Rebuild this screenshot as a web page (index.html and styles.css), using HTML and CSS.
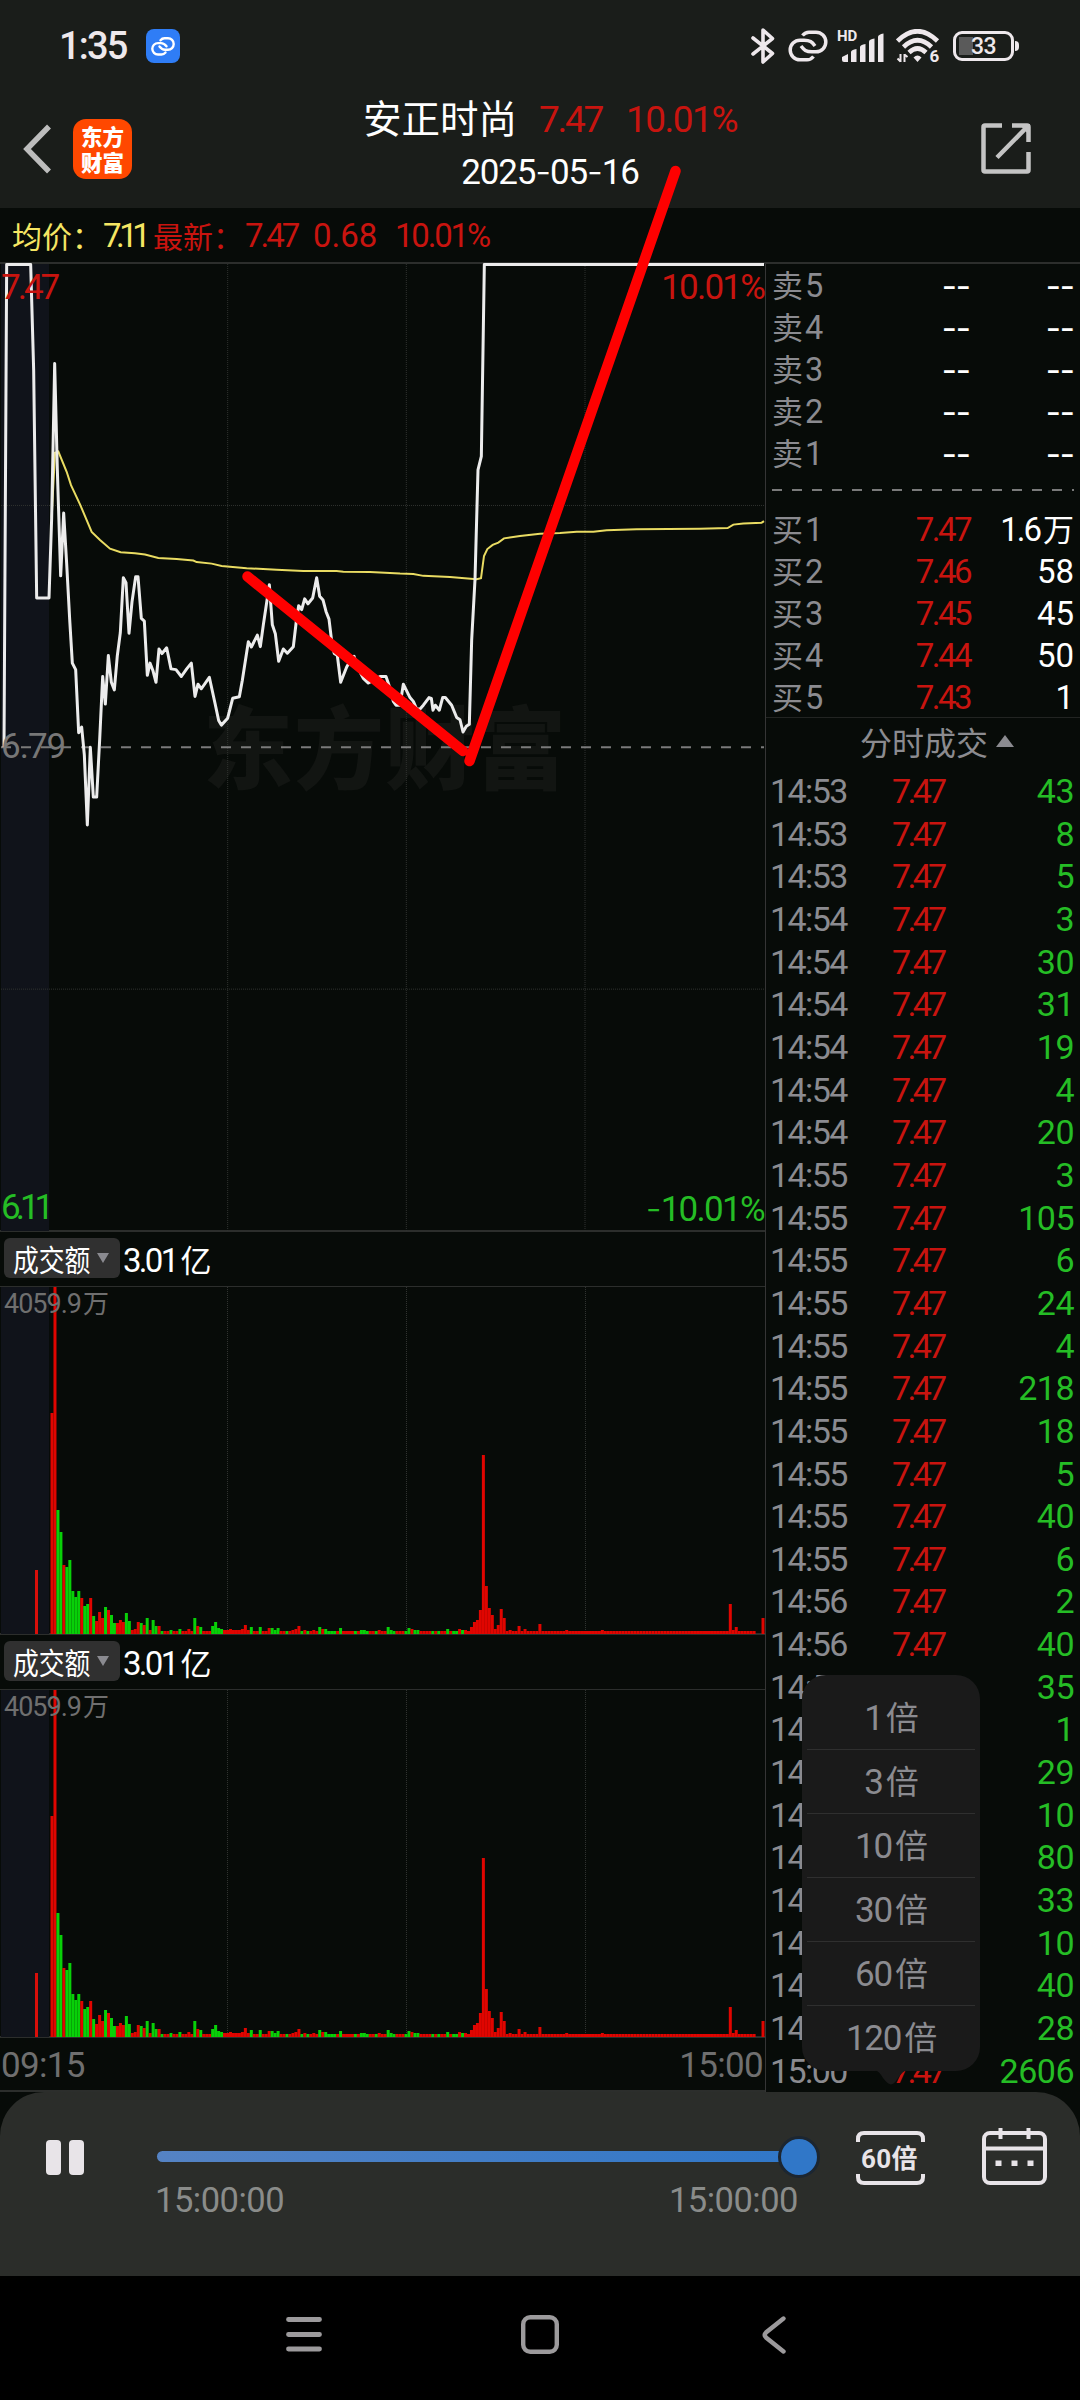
FILE: index.html
```html
<!DOCTYPE html>
<html lang="zh-CN">
<head>
    <meta charset="UTF-8">
    <meta name="viewport" content="width=device-width, initial-scale=1.0">
    <title>安正时尚 分时回放</title>
    <link rel="stylesheet" href="styles.css">
</head>
<body>
    <div class="screen">
        <!-- Status bar -->
        <div class="status-bar">
            <div class="status-left">
                <span class="clock">1:35</span>
                <span class="link-badge">
                    <svg width="34" height="34" viewBox="0 0 34 34"><g fill="none" stroke="#fff" stroke-width="2.4" stroke-linecap="round"><path d="M14.500 11.300 C15.800 9.700 17 9.300 18.500 9.300 H22 a5.700 5.700 0 0 1 0 11.400 H19 C16.500 20.700 15 19.500 13.500 17.500"/><path d="M19.500 23.500 C18.200 25.100 17 25.500 15.500 25.500 H12 a5.700 5.700 0 0 1 0 -11.400 H15 C17.500 14.100 19 15.300 20.500 17.300"/></g></svg>
                </span>
            </div>
            <div class="status-right">
                <svg class="bt" width="24" height="36" viewBox="0 0 24 36"><path d="M2 10 L21.500 25.500 L12 34 V2 L21.500 10.500 L2 26" fill="none" stroke="#eee8ec" stroke-width="3.6" stroke-linejoin="round" stroke-linecap="round"/></svg>
                <svg class="chain" width="40" height="32" viewBox="0 0 40 32"><g fill="none" stroke="#eee8ec" stroke-width="3.5"><path d="M14.500 5.500 C17 2.500 19 2.200 21 2.200 H28 a9.800 9.800 0 0 1 0 19.600 H24 C18 21.800 16 20 13 16"/><path d="M25.500 26.500 C23 29.500 21 29.800 19 29.800 H12 a9.800 9.800 0 0 1 0 -19.600 H16 C22 10.200 24 12 27 16"/></g></svg>
                <div class="signal">
                    <span class="hd">HD</span>
                    <svg width="42" height="29" viewBox="0 0 42 29" fill="#eee8ec"><path d="M0 24 L6 21 V29 H2 Q0 29 0 27Z"/><path d="M9 19 Q9 17 14.500 16 V29 H9Z"/><path d="M18 14 Q18 12 23.500 11 V29 H18Z"/><path d="M27 8.500 Q27 6.500 32.500 5.500 V29 H27Z"/><path d="M36 4 Q36 1.500 41.500 .5 V29 H36Z"/></svg>
                </div>
                <svg class="wifi" width="44" height="34" viewBox="0 0 44 34"><g fill="none" stroke="#eee8ec" stroke-width="4.600"><path d="M1.500 12 Q21.500 -7.500 41.500 12"/><path d="M7.500 18 Q21.500 4.500 35.500 18"/><path d="M13 23.500 Q21.500 15.500 30 23.500"/></g><path d="M17.500 28.500 Q21.500 24.500 25.500 28.500 L21.500 33Z" fill="#eee8ec"/><path d="M4.500 25 V33 M1.500 29.500 L4.500 32.500 M8.500 33 V25 M11.500 28 L8.500 25.500" stroke="#eee8ec" stroke-width="2"/><text x="33.500" y="33" class="wifi-gen">6</text></svg>
                <div class="battery"><span>33</span></div>
            </div>
        </div>

        <!-- Title bar -->
        <div class="title-bar">
            <div class="title-left">
                <svg width="30" height="50" viewBox="0 0 30 50"><path d="M27 2.500 L5 25 L27 47.500" fill="none" stroke="#bdbdbd" stroke-width="5.500"/></svg>
                <div class="logo"><span>东方</span><span>财富</span></div>
            </div>
            <div class="title-center">
                <div class="stock-line"><span class="stock-name">安正时尚</span><span class="stock-price">7.47</span><span class="stock-pct">10.01%</span></div>
                <div class="stock-date">2025<i>-</i>05<i>-</i>16</div>
            </div>
            <svg class="share" width="50" height="51" viewBox="0 0 50 51"><path d="M21 2.500 H4 Q2.500 2.500 2.500 4 V47 Q2.500 48.500 4 48.500 H46 Q47.500 48.500 47.500 47 V29 M31 2.500 H46 Q47.500 2.500 47.500 4 V19 M47 3 L16 34.500" fill="none" stroke="#c4c4c4" stroke-width="4.500"/><path d="M38 1 H49 V13Z" fill="#c4c4c4"/></svg>
        </div>

        <div class="quote-row">
            <span class="avg cn">均价：</span><span class="avg avg-num">7.11</span>
            <span class="red cn last-label">最新：</span><span class="red last-num">7.47</span><span class="red chg">0.68</span><span class="red pct">10.01%</span>
        </div>

        <div class="main">
            <div class="charts">
                <div class="price-chart">
                    <div class="watermark">东方财富</div>
                    <svg class="price-svg" viewBox="0 37 2292 2527" preserveAspectRatio="none">
                        <rect class="preopen" x="3" y="37" width="144" height="2527"/>
                        <path class="grid" d="M683 37V2564M1219 37V2564M1755 37V2564M3 668H2292M3 1932H2292"/>
                        <path class="base-line" d="M3 1300H2292"/>
                        <polyline class="avg-line" points="155,700 165,530 175,527 200,580 213,615 240,665 275,737 300,758 330,781 362,790 405,793 435,796 475,805 530,808 580,812 590,816 635,820 665,826 740,832 830,836 910,839 1010,839 1030,841 1110,842 1200,846 1240,847 1270,852 1350,855 1430,861 1443,858 1452,800 1462,782 1478,771 1495,765 1512,754 1560,748 1620,742 1680,740 1730,737 1780,737 1820,733 1910,730 2100,729 2183,727 2200,718 2230,715 2285,713 2292,709"/>
                        <polyline class="price-line" points="12,1300 20,38 92,38 101,315 110,910 147,910 155,700 164,297 172,575 182,852 191,688 200,820 209,965 217,1080 227,1097 236,1262 245,1247 253,1320 262,1503 271,1300 280,1430 290,1430 299,1280 308,1115 316,1187 325,1060 334,1130 343,1150 352,1060 361,1000 370,857 378,870 387,1002 396,920 407,854 414,854 424,963 433,970 442,1112 450,1080 459,1100 468,1130 477,1043 486,1055 500,1040 513,1095 528,1097 544,1115 560,1095 574,1080 585,1167 594,1135 604,1147 628,1117 645,1185 656,1230 664,1242 683,1224 698,1172 718,1168 727,1125 745,1024 754,1038 772,1007 781,1037 790,980 808,875 817,980 826,1003 836,1075 850,1043 862,1054 880,1037 889,970 896,930 905,940 914,912 924,925 938,910 950,857 959,905 969,915 978,945 987,965 996,1030 1003,1055 1012,1060 1022,1130 1040,1090 1050,1075 1062,1062 1075,1095 1090,1120 1105,1132 1120,1125 1140,1115 1158,1115 1166,1135 1180,1180 1188,1190 1200,1190 1210,1135 1230,1170 1240,1180 1250,1200 1260,1200 1270,1190 1287,1170 1294,1172 1299,1203 1306,1190 1318,1203 1328,1170 1336,1170 1355,1190 1370,1222 1380,1228 1389,1260 1399,1245 1408,1240 1415,1020 1425,862 1434,575 1444,540 1453,38 2292,38"/>
                    </svg>
                    <span class="axis axis-high">7.47</span>
                    <span class="axis axis-high-pct">10.01%</span>
                    <span class="axis axis-base">6.79</span>
                    <span class="axis axis-low">6.11</span>
                    <span class="axis axis-low-pct"><i>-</i>10.01%</span>
                </div>

                <div class="vol-head"><span class="vol-btn"><b>成交额</b><em></em></span><span class="vol-value">3.01<span>亿</span></span></div>
                <div class="vol-chart">
                    <svg class="vol-svg" width="765" height="348"></svg>
                    <span class="vol-max">4059.9<span>万</span></span>
                </div>
                <div class="vol-head"><span class="vol-btn"><b>成交额</b><em></em></span><span class="vol-value">3.01<span>亿</span></span></div>
                <div class="vol-chart">
                    <svg class="vol-svg" width="765" height="348"></svg>
                    <span class="vol-max">4059.9<span>万</span></span>
                </div>
                <div class="time-axis"><span>09:15</span><span>15:00</span></div>
            </div>

            <div class="side">
                <div class="book asks">
                    <div class="book-row"><span>卖<u>5</u></span><span class="none">--</span><span class="none">--</span></div>
                    <div class="book-row"><span>卖<u>4</u></span><span class="none">--</span><span class="none">--</span></div>
                    <div class="book-row"><span>卖<u>3</u></span><span class="none">--</span><span class="none">--</span></div>
                    <div class="book-row"><span>卖<u>2</u></span><span class="none">--</span><span class="none">--</span></div>
                    <div class="book-row"><span>卖<u>1</u></span><span class="none">--</span><span class="none">--</span></div>
                </div>
                <div class="book-divider"></div>
                <div class="book bids">
                    <div class="book-row"><span>买<u>1</u></span><span class="price">7.47</span><span class="vol">1.6<small>万</small></span></div>
                    <div class="book-row"><span>买<u>2</u></span><span class="price">7.46</span><span class="vol">58</span></div>
                    <div class="book-row"><span>买<u>3</u></span><span class="price">7.45</span><span class="vol">45</span></div>
                    <div class="book-row"><span>买<u>4</u></span><span class="price">7.44</span><span class="vol">50</span></div>
                    <div class="book-row"><span>买<u>5</u></span><span class="price">7.43</span><span class="vol">1</span></div>
                </div>
                <div class="ticks-head">分时成交<em></em></div>
                <div class="ticks" id="ticks"></div>
            </div>
        </div>

        <!-- Playback panel -->
        <div class="player">
            <div class="pause"><span></span><span></span></div>
            <div class="progress">
                <div class="track"><div class="thumb"></div></div>
                <div class="progress-times"><span>15:00:00</span><span>15:00:00</span></div>
            </div>
            <div class="speed">
                <svg width="69" height="54" viewBox="0 0 69 54"><path d="M2 11 V8 Q2 2 8 2 H61 Q67 2 67 8 V11 M2 43 V46 Q2 52 8 52 H61 Q67 52 67 46 V43" fill="none" stroke="#e8e4e8" stroke-width="4"/></svg>
                <span>60倍</span>
            </div>
            <svg class="calendar" width="65" height="58" viewBox="0 0 65 58"><g fill="none" stroke="#e8e4e8" stroke-width="4"><rect x="2" y="5" width="61" height="50" rx="6"/><path d="M2 20.500 H63"/><path d="M18.500 0 V11 M46.500 0 V11"/></g><path d="M13.500 32.500h6v5.500h-6z M29.500 32.500h6v5.500h-6z M45.500 32.500h6v5.500h-6z" fill="#e8e4e8"/></svg>
        </div>

        <div class="nav">
            <svg width="36" height="36" viewBox="0 0 36 36"><path d="M2.500 2.500H33.500M2.500 17.500H33.500M2.500 32H33.500" stroke="#9c9a9c" stroke-width="4.800" stroke-linecap="round"/></svg>
            <svg width="38" height="39" viewBox="0 0 38 39"><rect x="2.200" y="2.200" width="33.600" height="34.600" rx="7" fill="none" stroke="#9c9a9c" stroke-width="4.400"/></svg>
            <svg width="24" height="38" viewBox="0 0 24 38"><path d="M21.500 2.500 L4 16.500 Q1.500 19 4 21.500 L21.500 35.500" fill="none" stroke="#9c9a9c" stroke-width="4.400" stroke-linecap="round"/></svg>
        </div>

        <!-- Speed menu, floats over the tick list -->
        <div class="speed-menu">
            <div>1<span>倍</span></div>
            <div>3<span>倍</span></div>
            <div>10<span>倍</span></div>
            <div>30<span>倍</span></div>
            <div>60<span>倍</span></div>
            <div>120<span>倍</span></div>
            <svg width="36" height="15" viewBox="0 0 36 15"><path d="M2 0 Q6 1 10 8 Q15 14.500 18 14.500 Q21 14.500 25 8 Q30 1 34 0Z" fill="#1a1a1a"/></svg>
        </div>

        <!-- Hand drawn trend lines -->
        <svg class="marks" width="1080" height="800" viewBox="0 0 1080 800"><path d="M247.500 576.500 L463 751 M469.500 761 L675.500 171"/></svg>
    </div>
    <script src="script.js"></script>
</body>
</html>
```
FILE: styles.css
```css
* {
    box-sizing: border-box;
}

body {
    margin: 0;
    background: #000;
    font-family: Roboto, 'Noto Sans CJK SC', sans-serif;
    font-weight: 400;
    color: #fff;
}

i, em, u {
    font-style: normal;
    text-decoration: none;
}

.screen {
    position: relative;
    width: 1080px;
    height: 2400px;
    overflow: hidden;
    background: #070b08;
    display: flex;
    flex-direction: column;
    white-space: nowrap;
}

/* status bar */
.status-bar {
    height: 92px;
    background: #1a1d1a;
    display: flex;
    justify-content: space-between;
    align-items: center;
    padding: 0 61px 0 59px;
}

.status-left, .status-right {
    display: flex;
    align-items: center;
}

.clock {
    font-size: 38px;
    font-weight: 500;
    color: #eee8ec;
    letter-spacing: -1.8px;
    width: 87px;
}

.link-badge {
    width: 34px;
    height: 34px;
    border-radius: 8px;
    background: #2f7df6;
}

.link-badge svg {
    display: block;
}

.chain {
    margin-left: 13px;
}

.signal {
    display: flex;
    width: 49px;
    height: 32px;
    margin-left: 9px;
    align-items: flex-end;
    position: relative;
}

.signal svg {
    margin-left: 5px;
}

.hd {
    position: absolute;
    left: 0;
    top: -1px;
    font-size: 15px;
    line-height: 15px;
    font-weight: 700;
    color: #eee8ec;
}

.wifi {
    margin-left: 10px;
}

.wifi-gen {
    font-size: 17px;
    font-weight: 700;
    fill: #eee8ec;
}

.battery {
    position: relative;
    width: 61px;
    height: 30px;
    margin: 0 5px 0 13px;
    border: 3px solid #eee8ec;
    border-radius: 9px;
    background: linear-gradient(#5a5a5a, #5a5a5a) 3px 3px / 14px 18px no-repeat;
    color: #eee8ec;
    font-size: 23px;
    font-weight: 500;
    line-height: 26px;
    text-align: center;
    letter-spacing: -.5px;
}

.battery::after {
    content: "";
    position: absolute;
    right: -8px;
    top: 7px;
    width: 4px;
    height: 10px;
    border-radius: 0 4px 4px 0;
    background: #eee8ec;
}

/* title bar */
.title-bar {
    height: 116px;
    background: #1a1d1a;
    display: flex;
    justify-content: space-between;
    padding: 0 49px 0 22px;
}

.title-left {
    display: flex;
    align-items: center;
    height: 114px;
    width: 110px;
}

.logo {
    width: 59px;
    height: 60px;
    margin-left: 21px;
    border-radius: 13px;
    background: #ff4800;
    font-family: 'Noto Sans CJK SC', sans-serif;
    font-size: 21.5px;
    font-weight: 900;
    line-height: 26px;
    display: flex;
    flex-direction: column;
    align-items: center;
    justify-content: center;
}

.title-center {
    text-align: center;
    flex: 1;
    padding-right: 13px;
}

.stock-line {
    height: 54px;
    line-height: 56px;
    display: flex;
    justify-content: center;
}

.stock-name {
    font-size: 38.5px;
    font-weight: 400;
    margin-right: 22px;
}

.stock-price, .stock-pct {
    color: #c8140f;
    font-size: 37px;
    letter-spacing: -2.3px;
}

.stock-pct {
    margin-left: 24px;
    letter-spacing: -1.5px;
}

.stock-date {
    font-size: 35px;
    line-height: 50px;
    letter-spacing: -1.2px;
}

.stock-date i, .axis i {
    font-family: Inter, sans-serif;
    font-weight: 300;
    letter-spacing: -1px;
}

.share {
    margin-top: 31px;
    flex: none;
}

/* average / last price */
.quote-row {
    height: 54px;
    display: flex;
    align-items: center;
    font-size: 33px;
    padding-left: 12px;
}

.cn {
    font-size: 30px;
    font-family: 'Noto Sans CJK SC', sans-serif;
}

.avg {
    color: #f5e663;
}

.red {
    color: #c8140f;
}

.avg-num, .last-num {
    letter-spacing: -3px;
    width: 51px;
}

.avg-num {
    margin-left: 1px;
    letter-spacing: -5.5px;
}

.last-num {
    width: 68px;
    margin-left: 2px;
}

.last-label {
    margin-left: -1px;
}

.chg {
    width: 82px;
}

.pct {
    letter-spacing: -2.200px;
}

/* main */
.main {
    height: 1830px;
    display: flex;
    border-top: 2px solid #2c2e2c;
}

.charts {
    width: 766px;
    border-right: 1px solid #353535;
    display: flex;
    flex-direction: column;
}

.price-chart {
    position: relative;
    height: 968px;
    border-bottom: 2px solid #2c2e2c;
}

.price-svg {
    position: absolute;
    left: 0;
    top: 0;
    width: 764px;
    height: 967px;
    overflow: visible;
}

.price-svg path, .price-svg polyline {
    fill: none;
    vector-effect: non-scaling-stroke;
}

.preopen {
    fill: #10131a;
}

.grid {
    stroke: #303330;
    stroke-width: 1;
    stroke-dasharray: 1 1;
}

.base-line {
    stroke: #7a7a7a;
    stroke-width: 2;
    stroke-dasharray: 10 10;
}

.avg-line {
    stroke: #e9dc62;
    stroke-width: 2;
}

.price-line {
    stroke: #ececec;
    stroke-width: 3;
    stroke-linejoin: round;
}

.watermark {
    position: absolute;
    left: 203px;
    top: 413px;
    font-family: 'Noto Sans CJK SC', sans-serif;
    font-weight: 900;
    font-size: 90px;
    line-height: 132px;
    letter-spacing: 1px;
    color: #121512;
}

.axis {
    position: absolute;
    z-index: 2;
    font-size: 35px;
    line-height: 40px;
}

.axis-high {
    left: 1px;
    top: 4px;
    color: #c8140f;
    letter-spacing: -3px;
}

.axis-high-pct {
    right: 1px;
    top: 4px;
    color: #c8140f;
    letter-spacing: -1.800px;
}

.axis-base {
    left: 1px;
    top: 463px;
    color: #777;
    letter-spacing: -1px;
}

.axis-low {
    left: 1px;
    top: 924px;
    color: #25bd25;
    letter-spacing: -5px;
}

.axis-low-pct {
    right: 1px;
    top: 924px;
    color: #25bd25;
    letter-spacing: -1.700px;
}

.vol-head {
    height: 54px;
    display: flex;
    align-items: center;
    padding: 0 0 2px 4px;
}

.vol-btn {
    width: 116px;
    height: 40px;
    border-radius: 6px;
    background: #303030;
    display: flex;
    align-items: center;
    padding-left: 9px;
}

.vol-btn b {
    font: 400 30px/40px 'Noto Sans CJK SC', sans-serif;
    transform: scaleX(.86);
    transform-origin: left;
    width: 84px;
}

.vol-btn em {
    border: 6.500px solid transparent;
    border-top: 10px solid #8a8a90;
    border-bottom: 0;
}

.vol-value {
    font-size: 33px;
    margin-left: 3px;
    letter-spacing: -2.700px;
}

.vol-value span {
    font-size: 31px;
    margin-left: 4px;
}

.vol-chart {
    position: relative;
    height: 349px;
    border-top: 1px solid #2c2e2c;
    border-bottom: 2px solid #2c2e2c;
}

.vol-svg {
    display: block;
}

.vol-max {
    position: absolute;
    left: 4px;
    top: 1px;
    font-size: 27px;
    line-height: 32px;
    letter-spacing: -1px;
    color: #6f6f6f;
}

.vol-max span {
    font-size: 26px;
    margin-left: 2px;
}

.time-axis {
    flex: 1;
    display: flex;
    justify-content: space-between;
    align-items: center;
    padding: 2px 2px 0 1px;
    color: #6f6f6f;
    font-size: 35px;
    letter-spacing: -.700px;
    border-bottom: 2px solid #2c2e2c;
}

/* order book and ticks */
.side {
    flex: 1;
    padding-left: 6px;
}

.book {
    padding-right: 6px;
    color: #8b8b90;
    font-size: 31px;
}

.asks {
    padding-top: 1px;
}

.bids {
    padding-top: 18px;
    height: 228px;
}

.book-row {
    height: 42px;
    line-height: 42px;
    display: grid;
    grid-template-columns: 100px 98px 1fr;
}

.book-row u {
    font-size: 32.500px;
    margin-left: 2px;
}

.book-row span + span {
    text-align: right;
    font-size: 33px;
}

.book-row .none {
    font-family: Inter, sans-serif;
    color: #fff;
    letter-spacing: -1px;
}

.book-row .price {
    color: #c8140f;
    letter-spacing: -2.500px;
}

.book-row .vol {
    color: #fff;
}

.book-row .vol:has(small) {
    letter-spacing: -2px;
}

.vol small {
    font-size: 31px;
    margin-left: 3px;
    letter-spacing: 0;
}

.book-divider {
    height: 2px;
    margin: 14px 6px 0 0;
    background: repeating-linear-gradient(90deg, #7a7a7a 0 10px, transparent 10px 20px);
}

.ticks-head {
    height: 53px;
    margin: -2px 0 0 -6px;
    border-top: 1px solid #222422;
    display: flex;
    align-items: center;
    padding-left: 94px;
    color: #8b8b90;
    font-size: 32px;
    line-height: 50px;
}

.ticks-head em {
    margin: 0 0 6px 8px;
    border: 9px solid transparent;
    border-bottom: 12px solid #8b8b90;
    border-top: 0;
}

.tick {
    height: 42.670px;
    line-height: 42.670px;
    font-size: 34px;
    display: grid;
    grid-template-columns: 122px 80px 1fr;
    padding-right: 6px;
    margin-left: -2px;
}

.tick-time {
    color: #8b8b90;
    letter-spacing: -1.600px;
}

.tick-price {
    color: #c8140f;
    letter-spacing: -3.700px;
}

.tick-vol {
    color: #25bd25;
    text-align: right;
    letter-spacing: -.500px;
}

/* player */
.player {
    position: relative;
    height: 184px;
    background: #2b2d2a;
    border-radius: 44px 44px 0 0;
    display: flex;
    align-items: flex-start;
}

.pause {
    display: flex;
    gap: 8px;
    margin: 48px 0 0 46px;
    width: 111px;
}

.pause span {
    width: 15px;
    height: 35px;
    border-radius: 4px;
    background: #e8e4e8;
}

.progress {
    width: 660px;
    padding-top: 59px;
}

.track {
    position: relative;
    width: 642px;
    height: 11px;
    border-radius: 6px;
    background: linear-gradient(90deg, #5583c4, #3077c8);
}

.thumb {
    position: absolute;
    right: -21px;
    top: -15.500px;
    width: 42px;
    height: 42px;
    border-radius: 50%;
    background: #3077c8;
    border: 3px solid #1c2631;
}

.progress-times {
    width: 643px;
    display: flex;
    justify-content: space-between;
    color: #8a8c8a;
    font-size: 34.500px;
    line-height: 40px;
    margin: 18px 0 0 -2px;
    letter-spacing: -.500px;
}

.speed {
    width: 69px;
    height: 54px;
    margin: 39px 0 0 39px;
    position: relative;
}

.speed span {
    position: absolute;
    left: 5px;
    top: 11px;
    font-size: 26px;
    line-height: 34px;
    font-weight: 700;
    letter-spacing: .300px;
    color: #e8e4e8;
}

.calendar {
    margin: 36px 0 0 57px;
}

/* system navigation */
.nav {
    flex: 1;
    background: #000;
    display: flex;
    align-items: center;
    gap: 199px;
    padding: 0 0 7px 286px;
}

.nav svg + svg + svg {
    margin-left: 4px;
}

/* speed menu */
.speed-menu {
    position: absolute;
    left: 802px;
    top: 1675px;
    width: 178px;
    height: 396px;
    padding: 11px 5px 0;
    border-radius: 24px;
    background: #1a1a1a;
    color: #8b8b90;
    font-size: 35px;
    text-align: center;
}

.speed-menu div {
    height: 64px;
    line-height: 65px;
    border-bottom: 1px solid #2f2f2f;
    letter-spacing: -1.200px;
}

.speed-menu div:nth-child(6) {
    border-bottom: 0;
}

.speed-menu div span {
    font-size: 33px;
    margin-left: 3px;
}

.speed-menu svg {
    position: absolute;
    left: 71px;
    top: 395px;
}

/* drawn lines on top of everything */
.marks {
    position: absolute;
    left: 0;
    top: 0;
}

.marks path {
    fill: none;
    stroke: #ff0000;
    stroke-width: 10.500;
    stroke-linecap: round;
}
```
FILE: script.js
```js
// tick list: time, volume
const ticks = [
    ['14:53', 43], ['14:53', 8], ['14:53', 5],
    ['14:54', 3], ['14:54', 30], ['14:54', 31], ['14:54', 19], ['14:54', 4], ['14:54', 20],
    ['14:55', 3], ['14:55', 105], ['14:55', 6], ['14:55', 24], ['14:55', 4], ['14:55', 218],
    ['14:55', 18], ['14:55', 5], ['14:55', 40], ['14:55', 6],
    ['14:56', 2], ['14:56', 40], ['14:56', 35], ['14:56', 1], ['14:56', 29], ['14:56', 10],
    ['14:56', 80], ['14:56', 33], ['14:56', 10], ['14:56', 40], ['14:56', 28],
    ['15:00', 2606]
];

document.getElementById('ticks').innerHTML = ticks.map(t =>
    `<div class="tick"><span class="tick-time">${t[0]}</span><span class="tick-price">7.47</span><span class="tick-vol">${t[1]}</span></div>`
).join('');

// one bar per minute, r = up, g = down, number = height; "x" repeats a flat bar
const bars = [];
const data = 'r221 r347 g124 g102 r69 g67 g74 g43 g37 g43 r36 g28 g30 r36 g18 r13 r22 r16 g27 r24 g19 g11 r11 r14 r12 g21 g13 r4 r5 r12 g11 r9 g16 r4 g14 g8 r8 ' +
    'g3 r3 r3 g4 r3 r3 g5 r3 r3 r5 r3 g16 r8 g7 r3 r3 r3 g8 g12 g6 g5 r4 r4 r5 r4 r4 r4 r5 r9 r4 g7 r3 r3 g7 r3 r3 r6 g6 g4 g6 ' +
    'r3 r3 g3 r3 r4 r5 r8 g3 r4 g3 r3 r4 r3 g7 r5 g5 g3 g3 g3 r3 g6 x4 g3 r3 g4 g4 g3 r3 r3 g3 r4 r3 r3 g7 g4 g3 x3 ' +
    'g3 g6 r5 g4 g4 x4 g3 r3 g3 x2 g5 r3 g3 g3 r5 g4 r4 r3 r7 r12 r14 r24 r179 r48 r26 r19 r5 r9 r25 r16 r3 r4 x2 r8 r3 r5 x4 ' +
    'r10 x8 r4 x11 r4 x42 r30 r4 r7 x6 r0 r0 r16';

data.split(' ').forEach(item => {
    const n = Number(item.slice(1));
    if (item[0] === 'x') {
        for (let i = 0; i < n; i++) bars.push(['r', 3]);
    } else {
        bars.push([item[0], n]);
    }
});

const bottom = 347;
let svg = '<rect class="preopen" x="1" y="0" width="48" height="347"/>' +
    '<path class="grid" fill="none" d="M227.5 0V347M406.500 0V347M585.500 0V347"/>' +
    `<rect x="35" y="${bottom - 64}" width="3" height="64" fill="#d80f0a"/>`;
bars.forEach((bar, i) => {
    const color = bar[0] === 'r' ? '#e00500' : '#08d008';
    svg += `<rect x="${(50.5 + i * 2.975).toFixed(2)}" y="${bottom - bar[1]}" width="3" height="${bar[1]}" fill="${color}"/>`;
});
document.querySelectorAll('.vol-svg').forEach(el => {
    el.innerHTML = svg;
});
```
